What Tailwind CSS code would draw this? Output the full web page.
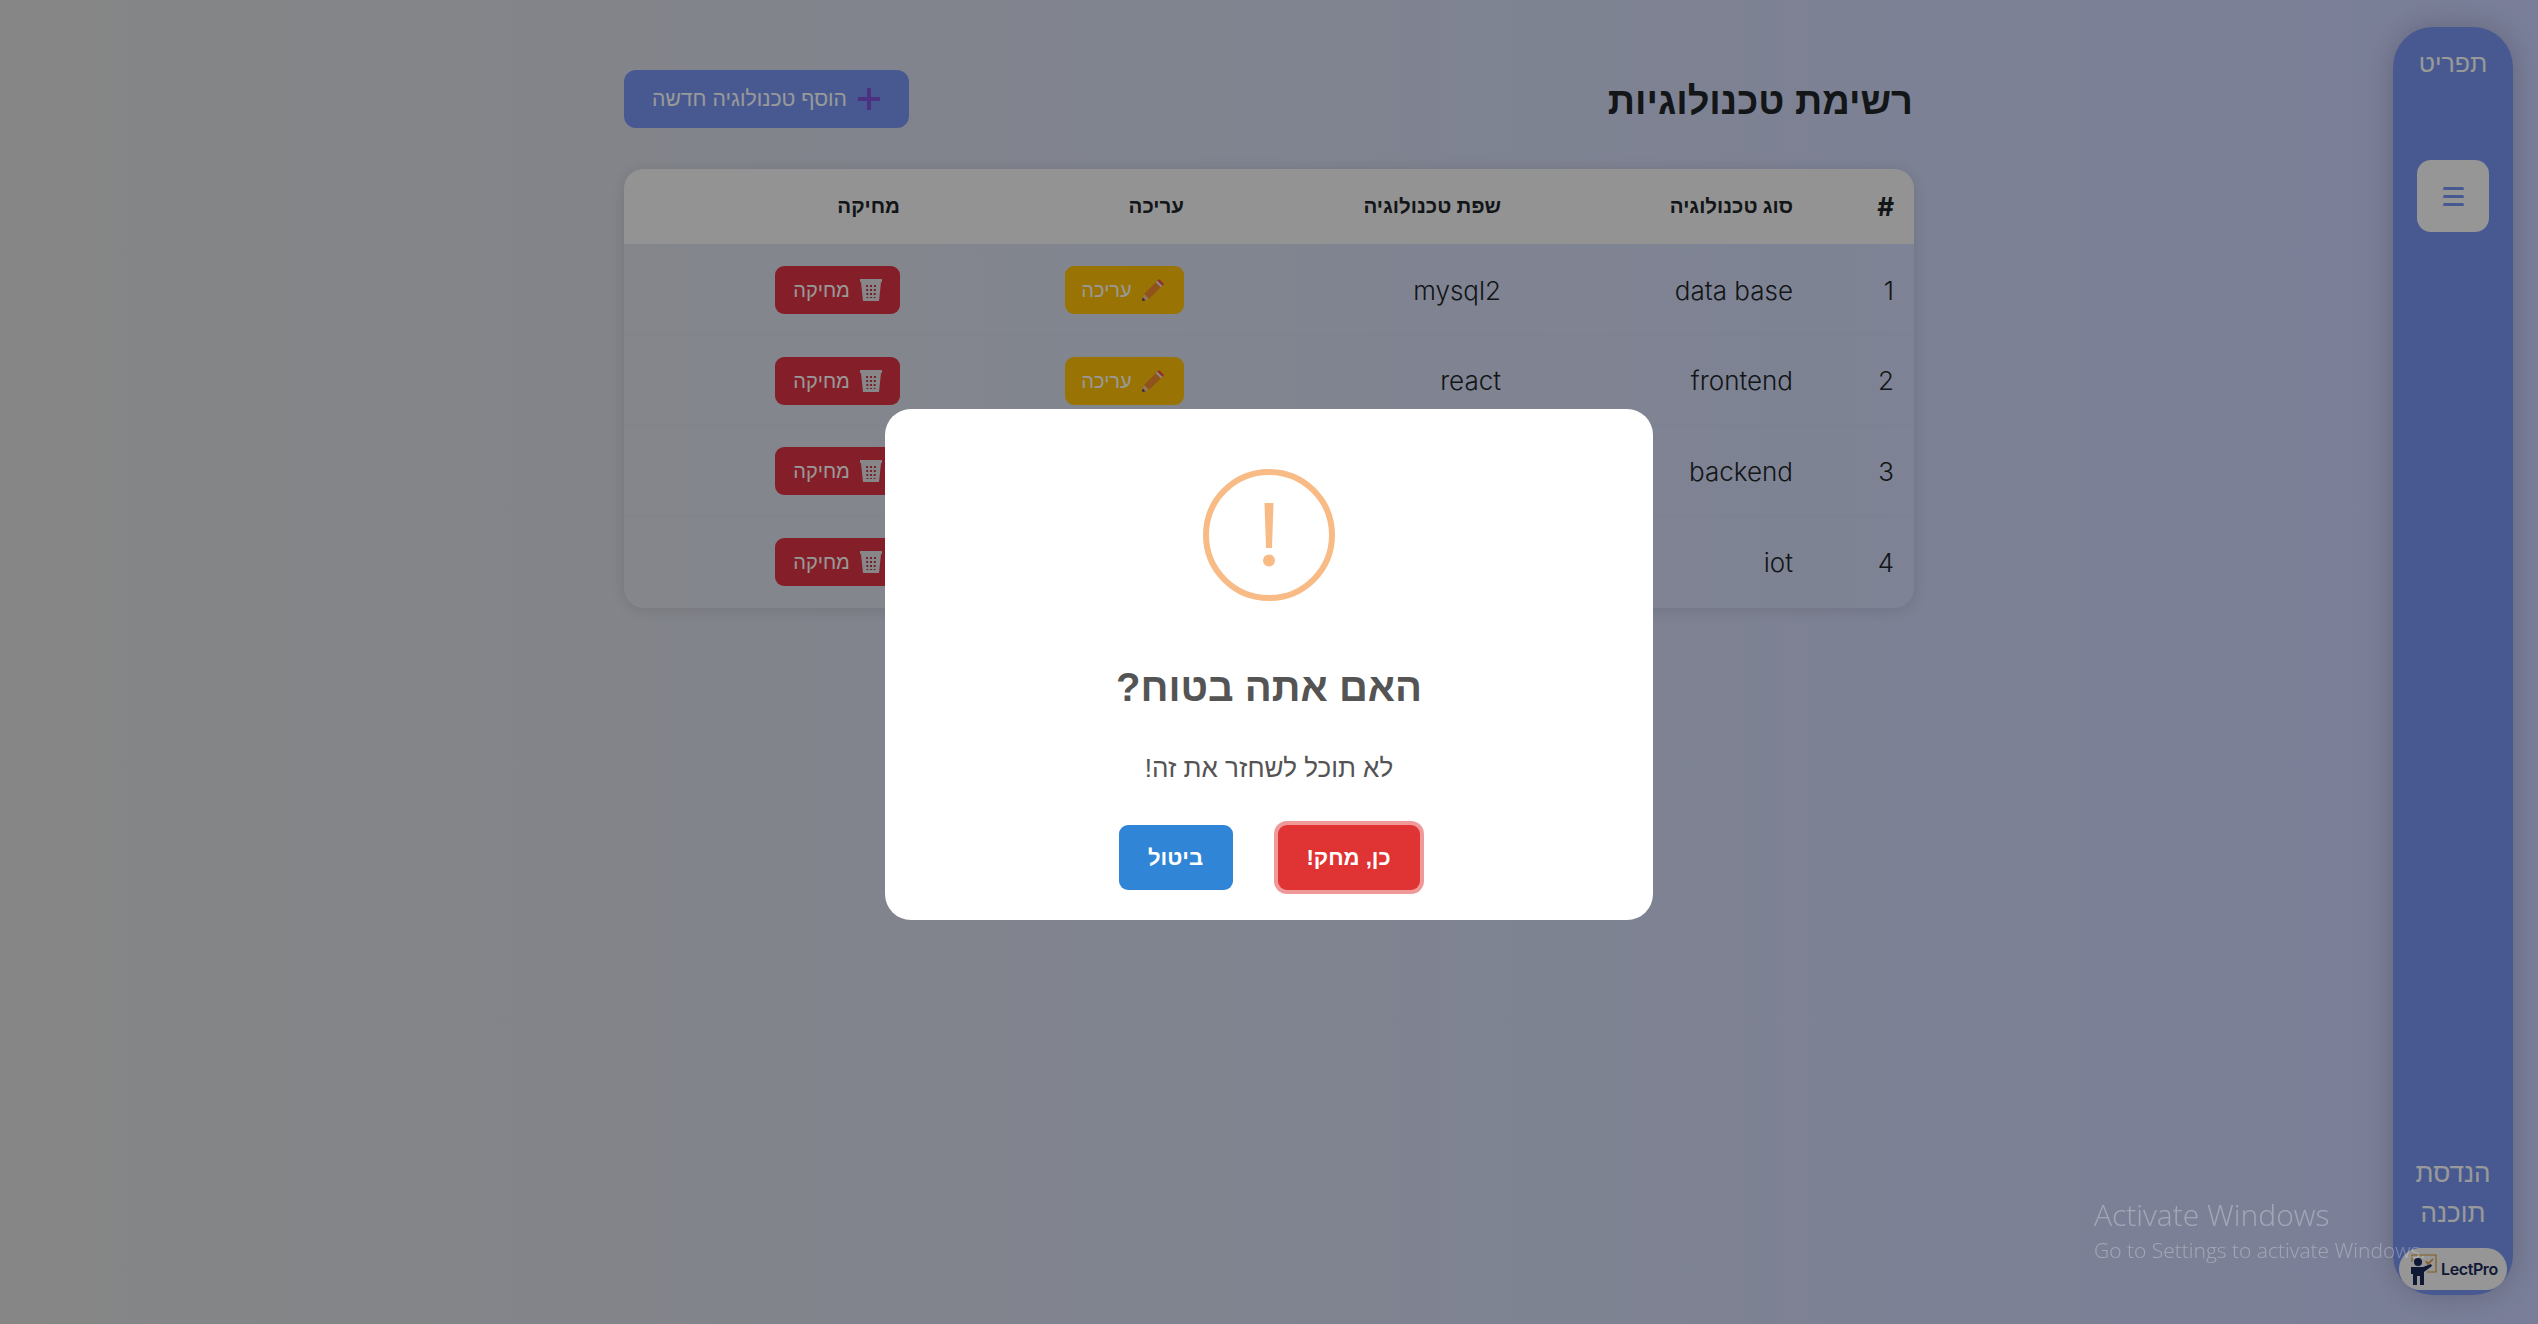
<!DOCTYPE html>
<html lang="he" dir="rtl">
<head>
  <meta charset="UTF-8">
  <title>רשימת טכנולוגיות</title>
  <script src="https://cdn.jsdelivr.net/npm/@tailwindcss/browser@4"></script>
</head>
<body class="h-[1324px] overflow-hidden bg-gradient-to-r from-[#dfdfdf] via-[#d5dcf0] to-[#cbd3ff] font-['Inter','Liberation_Sans',sans-serif] text-[#212529]">

  <!-- page -->
  <div class="grid grid-cols-[120px_1fr_120px] h-full px-[25px] pt-[27px] pb-[29px]">

    <!-- sidebar -->
    <aside class="flex flex-col items-center rounded-[40px] bg-[#7795f0] shadow-[0_0_30px_rgba(0,0,0,0.2)] text-white font-['Liberation_Sans',sans-serif]">
      <div class="mt-[18px] text-[25px] leading-9">תפריט</div>
      <button class="mt-[79px] flex h-[72px] w-[72px] flex-col items-center justify-center gap-[5px] rounded-[14px] bg-[#fafafa]">
        <span class="h-[3px] w-[21px] rounded-full bg-[#7795f0]"></span>
        <span class="h-[3px] w-[21px] rounded-full bg-[#7795f0]"></span>
        <span class="h-[3px] w-[21px] rounded-full bg-[#7795f0]"></span>
      </button>
      <div class="mt-auto text-center text-[26px] leading-10">הנדסת<br>תוכנה</div>
      <div dir="ltr" class="mt-[15px] mb-[5px] flex h-[42px] w-[108px] items-center gap-[2px] rounded-full bg-[#fafafa] pl-[10px]">
        <svg width="30" height="32" viewBox="0 0 30 32" class="shrink-0">
          <path d="M3 9V2h24v17h-9" fill="none" stroke="#e0973a" stroke-width="1.2"/>
          <path d="M17 8l2 3 5-5" fill="none" stroke="#e0973a" stroke-width="1.6"/>
          <circle cx="9" cy="9" r="4" fill="#1a2a5a"/>
          <path d="M2 14h12l8-3 1 2-8 6v13H11v-9H8v9H4V21H2z" fill="#1a2a5a"/>
        </svg>
        <span class="text-[16px] font-semibold tracking-tight text-[#1a2a5a] font-['Inter',sans-serif]">LectPro</span>
      </div>
    </aside>

    <!-- content -->
    <main class="mx-auto w-[1290px] pt-[43px]">
      <div class="flex h-[58px] items-center justify-between">
        <h1 class="pr-[1px] pt-[4px] text-[38px] font-bold font-['Liberation_Sans',sans-serif] text-[#212529]">רשימת טכנולוגיות</h1>
        <button class="flex h-[58px] w-[285px] items-center justify-center gap-[10px] rounded-[12px] bg-[#7795f0] text-[21.2px] text-white font-['Liberation_Sans',sans-serif]">
          <svg width="24" height="24" viewBox="0 0 24 24"><path d="M10 1h4v9h9v4h-9v9h-4v-9H1v-4h9z" fill="#7f50d8"/></svg>
          הוסף טכנולוגיה חדשה
        </button>
      </div>

      <div class="mt-[41px] h-[439px] overflow-hidden rounded-[20px] bg-white/5 shadow-[0_2px_16px_rgba(0,0,0,0.12)]">
        <table class="w-full table-fixed text-right">
          <colgroup>
            <col class="w-[101px]"><col class="w-[292px]"><col class="w-[317px]"><col class="w-[284px]"><col>
          </colgroup>
          <thead class="bg-[#f6f6f6] text-[20.5px]">
            <tr class="h-[75px]">
              <th class="pr-[20px] text-[26px] font-bold">#</th>
              <th class="pr-[20px] font-semibold">סוג טכנולוגיה</th>
              <th class="pr-[20px] font-semibold">שפת טכנולוגיה</th>
              <th class="pr-[20px] font-semibold">עריכה</th>
              <th class="pr-[20px] font-semibold">מחיקה</th>
            </tr>
          </thead>
          <tbody class="text-[26px] font-light [&_td]:pt-[2px]">
            <tr class="h-[90.5px] border-b border-black/[0.02]">
              <td class="pr-[20px]">1</td>
              <td class="pr-[20px]">data base</td>
              <td class="pr-[20px]">mysql2</td>
              <td class="pr-[20px]">
                <button class="inline-flex h-[48px] w-[119px] items-center justify-center gap-[10px] rounded-[9px] bg-[#ffc107] pr-[4px] text-[20px] font-normal text-white font-['Liberation_Sans',sans-serif]">
                  <svg width="22" height="22" viewBox="0 0 22 22"><path d="M15 2l5 5L7 20l-5-5z" fill="#f08a30"/><path d="M15 2l2-2 5 5-2 2z" fill="#ef5350"/><path d="M14.500 2.500l5 5" stroke="#e8e8e8" stroke-width="2"/><path d="M2 15l5 5-7 2z" fill="#f2c79a"/><path d="M0.800 18.500l2.700 2.700L0 22z" fill="#4a3a5a"/></svg>
                  עריכה
                </button>
              </td>
              <td class="pr-[20px]">
                <button class="inline-flex h-[48px] w-[125px] items-center justify-center gap-[10px] rounded-[9px] bg-[#dc3545] text-[20px] font-normal text-white font-['Liberation_Sans',sans-serif]">
                  <svg width="22" height="22" viewBox="0 0 22 22"><path d="M0 0h22v3h-1l-2 19H3L1 3H0z" fill="#e2e2e6"/><path d="M7 6l.500 13M11 6v13M15 6l-.500 13" stroke="#c03a48" stroke-width="2" stroke-dasharray="2 2"/></svg>
                  מחיקה
                </button>
              </td>
            </tr>
            <tr class="h-[90.5px] border-b border-black/[0.02]">
              <td class="pr-[20px]">2</td>
              <td class="pr-[20px]">frontend</td>
              <td class="pr-[20px]">react</td>
              <td class="pr-[20px]">
                <button class="inline-flex h-[48px] w-[119px] items-center justify-center gap-[10px] rounded-[9px] bg-[#ffc107] pr-[4px] text-[20px] font-normal text-white font-['Liberation_Sans',sans-serif]">
                  <svg width="22" height="22" viewBox="0 0 22 22"><path d="M15 2l5 5L7 20l-5-5z" fill="#f08a30"/><path d="M15 2l2-2 5 5-2 2z" fill="#ef5350"/><path d="M14.500 2.500l5 5" stroke="#e8e8e8" stroke-width="2"/><path d="M2 15l5 5-7 2z" fill="#f2c79a"/><path d="M0.800 18.500l2.700 2.700L0 22z" fill="#4a3a5a"/></svg>
                  עריכה
                </button>
              </td>
              <td class="pr-[20px]">
                <button class="inline-flex h-[48px] w-[125px] items-center justify-center gap-[10px] rounded-[9px] bg-[#dc3545] text-[20px] font-normal text-white font-['Liberation_Sans',sans-serif]">
                  <svg width="22" height="22" viewBox="0 0 22 22"><path d="M0 0h22v3h-1l-2 19H3L1 3H0z" fill="#e2e2e6"/><path d="M7 6l.500 13M11 6v13M15 6l-.500 13" stroke="#c03a48" stroke-width="2" stroke-dasharray="2 2"/></svg>
                  מחיקה
                </button>
              </td>
            </tr>
            <tr class="h-[90.5px] border-b border-black/[0.02]">
              <td class="pr-[20px]">3</td>
              <td class="pr-[20px]">backend</td>
              <td class="pr-[20px]">node</td>
              <td class="pr-[20px]"></td>
              <td class="pr-[20px]">
                <button class="inline-flex h-[48px] w-[125px] items-center justify-center gap-[10px] rounded-[9px] bg-[#dc3545] text-[20px] font-normal text-white font-['Liberation_Sans',sans-serif]">
                  <svg width="22" height="22" viewBox="0 0 22 22"><path d="M0 0h22v3h-1l-2 19H3L1 3H0z" fill="#e2e2e6"/><path d="M7 6l.500 13M11 6v13M15 6l-.500 13" stroke="#c03a48" stroke-width="2" stroke-dasharray="2 2"/></svg>
                  מחיקה
                </button>
              </td>
            </tr>
            <tr class="h-[90.5px]">
              <td class="pr-[20px]">4</td>
              <td class="pr-[20px]">iot</td>
              <td class="pr-[20px]"></td>
              <td class="pr-[20px]"></td>
              <td class="pr-[20px]">
                <button class="inline-flex h-[48px] w-[125px] items-center justify-center gap-[10px] rounded-[9px] bg-[#dc3545] text-[20px] font-normal text-white font-['Liberation_Sans',sans-serif]">
                  <svg width="22" height="22" viewBox="0 0 22 22"><path d="M0 0h22v3h-1l-2 19H3L1 3H0z" fill="#e2e2e6"/><path d="M7 6l.500 13M11 6v13M15 6l-.500 13" stroke="#c03a48" stroke-width="2" stroke-dasharray="2 2"/></svg>
                  מחיקה
                </button>
              </td>
            </tr>
          </tbody>
        </table>
      </div>
    </main>

    <div></div>
  </div>

  <!-- dialog overlay -->
  <div class="fixed inset-0 flex items-center justify-center bg-black/40 pt-[5px] font-['Liberation_Sans',sans-serif]">
    <div class="flex h-[511px] w-[768px] flex-col items-center rounded-[26px] bg-white pt-[60px] text-[#545454]">
      <div class="flex h-[132px] w-[132px] items-center justify-center rounded-full border-[6px] border-[#f8bb86]">
        <svg width="14" height="64" viewBox="0 0 14 64"><path d="M2.500 0h9L10 45H4z" fill="#f8bb86"/><circle cx="7" cy="57.500" r="6" fill="#f8bb86"/></svg>
      </div>
      <h2 class="mt-[60px] text-[40px] leading-[52px] font-bold">האם אתה בטוח?</h2>
      <p class="mt-[37px] text-[26px] leading-[36px]">לא תוכל לשחזר את זה!</p>
      <div class="mt-[39px] flex items-center gap-[45px]">
        <button class="h-[65px] w-[142px] rounded-[9px] bg-[#e03333] text-[22px] font-bold text-white ring-[4px] ring-[#e03333]/50">כן, מחק!</button>
        <button class="h-[65px] w-[114px] rounded-[9px] bg-[#3085d6] text-[22px] font-bold text-white">ביטול</button>
      </div>
    </div>
  </div>

  <!-- windows watermark -->
  <div dir="ltr" class="pointer-events-none fixed left-[2094px] top-[1195px] font-['Open_Sans',sans-serif] font-light text-white/30">
    <div class="text-[30px] leading-[40px]">Activate Windows</div>
    <div class="text-[21px] leading-[30px] whitespace-nowrap">Go to Settings to activate Windows.</div>
  </div>

</body>
</html>
